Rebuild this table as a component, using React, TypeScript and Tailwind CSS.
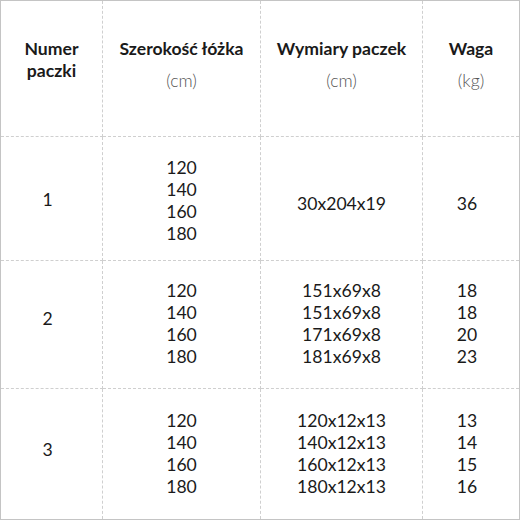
export default function App() {
  const rows = [
    {
      no: "1",
      widths: ["120", "140", "160", "180"],
      dims: ["30x204x19"],
      weights: ["36"],
      pad: ["pt-[3px]", "pt-[5px]", "pt-[11px]", "pt-[11px]"],
    },
    {
      no: "2",
      widths: ["120", "140", "160", "180"],
      dims: ["151x69x8", "151x69x8", "171x69x8", "181x69x8"],
      weights: ["18", "18", "20", "23"],
      pad: ["pb-[11px]", "pb-[2px]", "pb-[2px]", "pb-[2px]"],
    },
    {
      no: "3",
      widths: ["120", "140", "160", "180"],
      dims: ["120x12x13", "140x12x13", "160x12x13", "180x12x13"],
      weights: ["13", "14", "15", "16"],
      pad: ["pb-[8px]", "", "", ""],
    },
  ];

  const cell = "border-[#cfcfcf] border-dashed flex flex-col items-center text-center";

  return (
    <div className="w-[520px] h-[520px] bg-white font-['Lato',sans-serif] text-[17.6px] leading-[22px] text-[#1a1a1a]">
      <div className="w-full h-full border border-[#c4c4c4] grid grid-cols-[102px_158px_162px_1fr] grid-rows-[136px_124px_128px_1fr]">
        <div className={`${cell} border-r border-b pt-[37px] font-bold`}>
          <span>Numer</span>
          <span>paczki</span>
        </div>
        <div className={`${cell} border-r border-b pt-[37px]`}>
          <span className="font-bold">Szerokość łóżka</span>
          <span className="mt-[10px] font-light text-[#555]">(cm)</span>
        </div>
        <div className={`${cell} border-r border-b pt-[37px]`}>
          <span className="font-bold">Wymiary paczek</span>
          <span className="mt-[10px] font-light text-[#555]">(cm)</span>
        </div>
        <div className={`${cell} border-b pt-[37px]`}>
          <span className="font-bold">Waga</span>
          <span className="mt-[10px] font-light text-[#555]">(kg)</span>
        </div>

        {rows.map((r, i) => {
          const last = i === rows.length - 1;
          const b = last ? "" : "border-b";
          return [
            <div key={`n${i}`} className={`${cell} ${b} ${r.pad[0]} border-r justify-center pr-[8px]`}>
              <span>{r.no}</span>
            </div>,
            <div key={`w${i}`} className={`${cell} ${b} ${r.pad[1]} border-r justify-center`}>
              {r.widths.map((w, j) => (
                <span key={j}>{w}</span>
              ))}
            </div>,
            <div key={`d${i}`} className={`${cell} ${b} ${r.pad[2]} border-r justify-center`}>
              {r.dims.map((d, j) => (
                <span key={j}>{d}</span>
              ))}
            </div>,
            <div key={`k${i}`} className={`${cell} ${b} ${r.pad[3]} justify-center pr-[8px]`}>
              {r.weights.map((k, j) => (
                <span key={j}>{k}</span>
              ))}
            </div>,
          ];
        })}
      </div>
    </div>
  );
}
